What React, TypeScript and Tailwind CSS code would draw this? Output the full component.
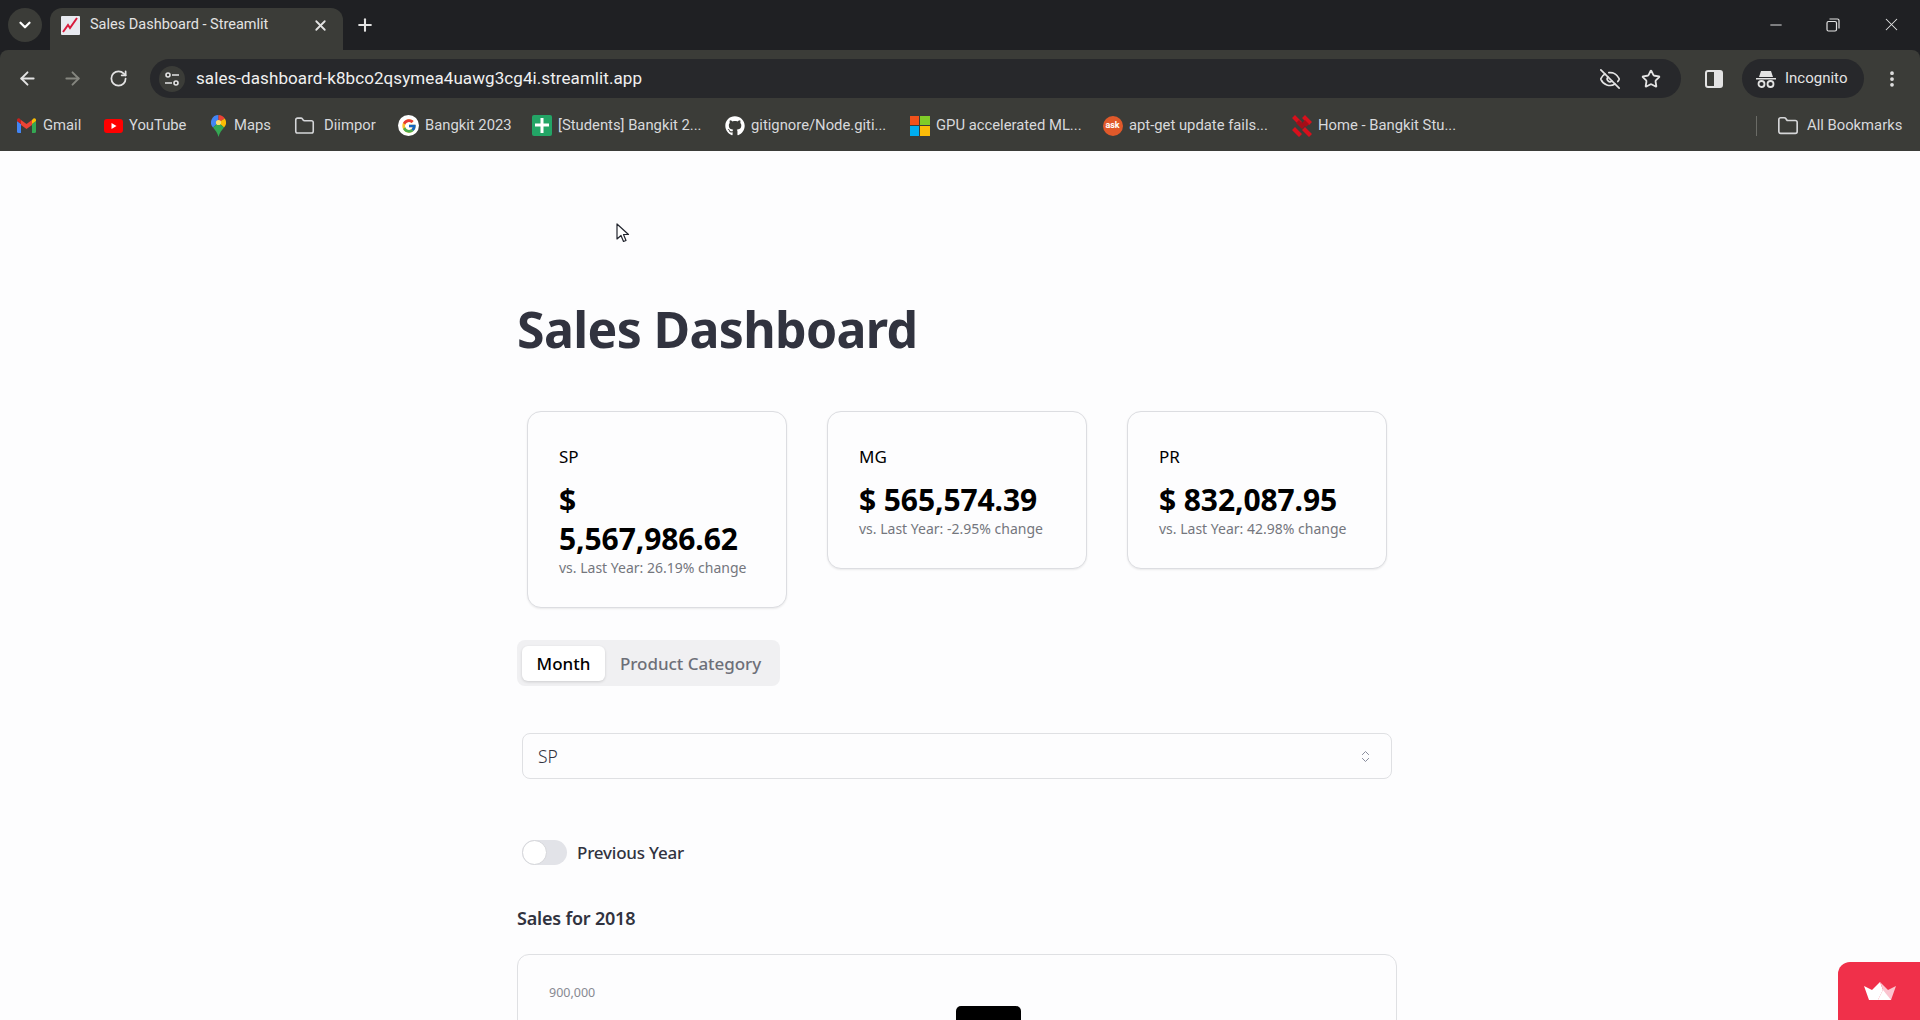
import { ArrowLeft, ArrowRight, ChevronDown, ChevronsUpDown, EllipsisVertical, EyeOff, Folder, Minus, Plus, RotateCw, Star, X } from "lucide-react";
import { FaGithub } from "react-icons/fa";
import type { ReactNode } from "react";

const GmailIcon = () => (
  <svg width="19" height="15" viewBox="0 0 19 15">
    <path d="M0 3v10.5A1.5 1.5 0 0 0 1.5 15H4V6z" fill="#4285f4" />
    <path d="M19 3v10.5a1.5 1.5 0 0 1-1.500 1.500H15V6z" fill="#34a853" />
    <path d="M4 7V2L9.500 6 15 2v5L9.500 11z" fill="#ea4335" />
    <path d="M15 2l1.500-1.500C17.500-.3 19 .4 19 2v1l-4 3z" fill="#fbbc04" />
    <path d="M4 2L2.500.5C1.500-.3 0 .4 0 2v1l4 3z" fill="#c5221f" />
  </svg>
);

const YoutubeIcon = () => (
  <svg width="19" height="14" viewBox="0 0 19 14">
    <rect width="19" height="14" rx="3" fill="#f00" />
    <path d="M7.500 4v6l5-3z" fill="#fff" />
  </svg>
);

const MapsIcon = () => (
  <svg width="15" height="22" viewBox="0 0 15 22">
    <path d="M7.500 0A7.500 7.500 0 0 0 2 12.600L7.500 7.500z" fill="#4285f4" />
    <path d="M7.500 0a7.500 7.500 0 0 1 6.300 3.500L7.500 7.500z" fill="#ea4335" />
    <path d="M13.800 3.500A7.500 7.500 0 0 1 13 12.600L7.500 7.500z" fill="#fbbc04" />
    <path d="M2 12.600L7.500 7.500 13 12.600C11 15 8.500 18 7.500 22 6.500 18 4 15 2 12.600z" fill="#34a853" />
    <circle cx="7.500" cy="7.500" r="2.600" fill="#fbdc6c" />
  </svg>
);

const GoogleIcon = () => (
  <span className="flex h-[21px] w-[21px] items-center justify-center rounded-full bg-white">
    <svg width="16" height="16" viewBox="0 0 48 48">
      <path d="M43.600 20.100H42V20H24v8h11.300C33.700 32.700 29.200 36 24 36c-6.600 0-12-5.400-12-12s5.400-12 12-12c3.100 0 5.900 1.200 8 3l5.700-5.700C34 6.100 29.300 4 24 4 13 4 4 13 4 24s9 20 20 20 20-9 20-20c0-1.300-.1-2.700-.4-3.900z" fill="#fbc02d" />
      <path d="M6.300 14.700l6.600 4.800C14.700 15.100 19 12 24 12c3.100 0 5.900 1.200 8 3l5.700-5.700C34 6.100 29.300 4 24 4 16.300 4 9.700 8.300 6.300 14.700z" fill="#e53935" />
      <path d="M24 44c5.200 0 9.900-2 13.400-5.200l-6.200-5.200C29.200 35.100 26.700 36 24 36c-5.200 0-9.600-3.300-11.300-7.900l-6.500 5C9.500 39.600 16.200 44 24 44z" fill="#4caf50" />
      <path d="M43.600 20.100H42V20H24v8h11.300c-.8 2.200-2.200 4.200-4.100 5.600l6.200 5.200C37 39.200 44 34 44 24c0-1.300-.1-2.700-.4-3.900z" fill="#1565c0" />
    </svg>
  </span>
);

const SheetIcon = () => (
  <svg width="20" height="21" viewBox="0 0 20 21">
    <rect width="20" height="21" rx="2" fill="#23a566" />
    <path d="M10 3v15M3 10h14" stroke="#fff" strokeWidth="3" />
  </svg>
);

const MicrosoftIcon = () => (
  <span className="grid h-[20px] w-[20px] grid-cols-2 gap-[1px]">
    <span className="bg-[#f1511b]" />
    <span className="bg-[#80cc28]" />
    <span className="bg-[#00adef]" />
    <span className="bg-[#fbbc09]" />
  </span>
);

const AskIcon = () => (
  <span className="flex h-[20px] w-[20px] items-center justify-center rounded-full bg-[#e0592a] text-[9px] font-bold text-white">ask</span>
);

const BangkitIcon = () => (
  <svg width="20" height="22" viewBox="0 0 20 22">
    <path d="M3 0l7 7-3 3-7-7zM13 0l7 7-3 3-7-7zM3 12l7 7-3 3-7-7zM13 12l7 7-3 3-7-7z" fill="#d8101c" />
    <path d="M7 5l6 6-3 3-6-6zM13 5l4 4-3 3-4-4z" fill="#a50d18" />
  </svg>
);

const FolderIcon = () => <Folder size={22} strokeWidth={1.8} className="text-[#d5d6d8]" />;

const bookmarks: { label: string; icon: ReactNode; width: string; gap: string }[] = [
  { label: "Gmail", icon: <GmailIcon />, width: "w-[87px]", gap: "ml-[6px]" },
  { label: "YouTube", icon: <YoutubeIcon />, width: "w-[105px]", gap: "ml-[5px]" },
  { label: "Maps", icon: <MapsIcon />, width: "w-[86px]", gap: "ml-[5px]" },
  { label: "Diimpor", icon: <FolderIcon />, width: "w-[104px]", gap: "ml-[9px]" },
  { label: "Bangkit 2023", icon: <GoogleIcon />, width: "w-[133px]", gap: "ml-[6px]" },
  { label: "[Students] Bangkit 2...", icon: <SheetIcon />, width: "w-[193px]", gap: "ml-[6px]" },
  { label: "gitignore/Node.giti...", icon: <FaGithub size={20} className="text-white" />, width: "w-[185px]", gap: "ml-[6px]" },
  { label: "GPU accelerated ML...", icon: <MicrosoftIcon />, width: "w-[193px]", gap: "ml-[6px]" },
  { label: "apt-get update fails...", icon: <AskIcon />, width: "w-[189px]", gap: "ml-[6px]" },
  { label: "Home - Bangkit Stu...", icon: <BangkitIcon />, width: "w-[190px]", gap: "ml-[6px]" },
];

const metrics = [
  { name: "SP", value: "$ 5,567,986.62", change: "vs. Last Year: 26.19% change" },
  { name: "MG", value: "$ 565,574.39", change: "vs. Last Year: -2.95% change" },
  { name: "PR", value: "$ 832,087.95", change: "vs. Last Year: 42.98% change" },
];

function BrowserChrome() {
  return (
    <div className="bg-[#1f2023] font-['Roboto',sans-serif] text-[#e3e3e3]">
      <div className="flex h-[50px] items-end pl-2">
        <div className="mb-[8px] flex h-[34px] w-[34px] items-center justify-center rounded-full bg-[#3b3c38]">
          <ChevronDown size={18} strokeWidth={3} className="text-white" />
        </div>
        <div className="ml-2 flex h-[42px] w-[293px] items-center rounded-t-[12px] bg-[#3b3c38] pb-[8px] pl-[11px]">
          <svg width="19" height="19" viewBox="0 0 19 19">
            <rect width="19" height="19" rx="1" fill="#e8eaf0" />
            <path d="M2 16l5-7 2 3 7-10" fill="none" stroke="#d81b3c" strokeWidth="2" />
          </svg>
          <span className="ml-[10px] text-[14.500px]">Sales Dashboard - Streamlit</span>
          <X size={17} strokeWidth={2.5} className="ml-auto mr-[14px]" />
        </div>
        <Plus size={20} strokeWidth={2.5} className="mb-[15px] ml-[12px]" />
        <div className="mb-[15px] ml-auto flex items-center">
          <Minus size={18} strokeWidth={1.3} />
          <svg width="14" height="14" viewBox="0 0 14 14" className="ml-[41px]" fill="none" stroke="currentColor" strokeWidth="1.200">
            <rect x="1" y="3.500" width="9.500" height="9.500" rx="1.500" />
            <path d="M3.500 1h8a1.500 1.500 0 0 1 1.500 1.500v8" />
          </svg>
          <X size={21} strokeWidth={1.2} className="ml-[41px] mr-[18px]" />
        </div>
      </div>

      <div className="flex h-[50px] items-center rounded-t-[8px] bg-[#3b3c38] pl-[17px] pt-[7px]">
        <ArrowLeft size={21} strokeWidth={2.2} />
        <ArrowRight size={21} strokeWidth={2.2} className="ml-[24px] text-[#85867f]" />
        <RotateCw size={19} strokeWidth={2.2} className="ml-[26px]" />
        <div className="ml-[22px] flex h-[39px] w-[1531px] items-center rounded-full bg-[#27282b] pl-[9px]">
          <span className="flex h-[26px] w-[26px] items-center justify-center rounded-full bg-[#3b3c38]">
            <svg width="16" height="14" viewBox="0 0 16 14" fill="none" stroke="#e3e3e3" strokeWidth="1.600">
              <circle cx="4" cy="3" r="2" />
              <path d="M8 3h7M1 11h7" />
              <circle cx="12" cy="11" r="2" />
            </svg>
          </span>
          <span className="ml-[11px] text-[17px] tracking-[0.08px] text-[#f0f0f0]">sales-dashboard-k8bco2qsymea4uawg3cg4i.streamlit.app</span>
          <EyeOff size={22} strokeWidth={1.8} className="ml-auto" />
          <Star size={20} strokeWidth={2.2} className="ml-[20px] mr-[20px]" />
        </div>
        <svg width="18" height="18" viewBox="0 0 18 18" className="ml-[24px]">
          <rect x="1" y="1" width="16" height="16" rx="2" fill="none" stroke="#e3e3e3" strokeWidth="2" />
          <rect x="9" y="1" width="8" height="16" fill="#e3e3e3" />
        </svg>
        <div className="ml-[19px] flex h-[39px] w-[122px] items-center rounded-full bg-[#27282b] pl-[14px]">
          <svg width="20" height="18" viewBox="0 0 20 18" fill="#e3e3e3">
            <path d="M5 1h10l2 6H3zM0 8h20v1.500H0z" />
            <circle cx="5.500" cy="14" r="3" fill="none" stroke="#e3e3e3" strokeWidth="1.800" />
            <circle cx="14.500" cy="14" r="3" fill="none" stroke="#e3e3e3" strokeWidth="1.800" />
          </svg>
          <span className="ml-[9px] text-[15px]">Incognito</span>
        </div>
        <EllipsisVertical size={20} strokeWidth={2.5} className="ml-[18px]" />
      </div>

      <div className="flex h-[51px] items-center bg-[#3b3c38] pl-[16px] text-[14.800px] text-[#d8d9dc]">
        {bookmarks.map((b) => (
          <div key={b.label} className={`flex items-center whitespace-nowrap ${b.width}`}>
            <span className="flex w-[21px] justify-center">{b.icon}</span>
            <span className={b.gap}>{b.label}</span>
          </div>
        ))}
        <div className="ml-[275px] h-[20px] w-px bg-[#6a6b66]" />
        <span className="ml-[20px]">
          <FolderIcon />
        </span>
        <span className="ml-[8px] whitespace-nowrap">All Bookmarks</span>
      </div>
    </div>
  );
}

function MetricCard({ name, value, change }: { name: string; value: string; change: string }) {
  return (
    <div className="w-[260px] self-start rounded-[14px] border border-[#dcdde1] bg-[#fdfdfe] pb-[30px] pl-[31px] pr-[29px] pt-[32px] shadow-[0_1px_2px_rgba(0,0,0,0.08)]">
      <div className="text-[17px] leading-[26px] text-black">{name}</div>
      <div className="mt-[10px] text-[30px] font-bold leading-[39px] tracking-[-0.1px] text-black">{value}</div>
      <div className="mt-[1px] text-[14px] leading-[18px] text-[#74767d]">{change}</div>
    </div>
  );
}

export default function App() {
  return (
    <div className="relative h-screen overflow-hidden bg-[#fdfdfe] font-['Noto_Sans',sans-serif]">
      <BrowserChrome />

      <main className="ml-[517px] w-[880px]">
        <h1 className="mt-[141px] text-[50px] font-bold leading-[74px] tracking-[-0.65px] text-[#31333f]">Sales Dashboard</h1>

        <div className="ml-[10px] mt-[45px] flex h-[199px] gap-[40px]">
          {metrics.map((m) => (
            <MetricCard key={m.name} {...m} />
          ))}
        </div>

        <div className="mt-[30px] flex h-[46px] w-[263px] items-center gap-[15px] rounded-[8px] bg-[#f0f0f2] px-[5px]">
          <div className="flex h-[35px] w-[83px] items-center justify-center rounded-[6px] bg-white pt-[1px] text-[17px] font-medium text-black shadow-[0_1px_3px_rgba(0,0,0,0.15)]">Month</div>
          <div className="whitespace-nowrap pt-[1px] text-[17px] font-medium tracking-[-0.05px] text-[#6d6f78]">Product Category</div>
        </div>

        <div className="ml-[5px] mt-[47px] flex h-[46px] w-[870px] items-center justify-between rounded-[8px] border border-[#dfe0e3] pl-[15px] pr-[18px] text-[17.500px] font-light text-[#31333f]">
          <span>SP</span>
          <ChevronsUpDown size={15} strokeWidth={1.5} className="text-[#808495]" />
        </div>

        <div className="ml-[5px] mt-[60px] flex items-center gap-[10px]">
          <div className="h-[25px] w-[45px] rounded-full bg-[#e2e3e8]">
            <div className="h-[25px] w-[25px] rounded-full border border-[#d5d6da] bg-white" />
          </div>
          <span className="pt-[1px] text-[17px] font-medium tracking-[-0.2px] text-[#31333f]">Previous Year</span>
        </div>

        <h2 className="mt-[38px] text-[18px] font-semibold leading-[28px] tracking-[-0.2px] text-[#31333f]">Sales for 2018</h2>

        <div className="relative mt-[22px] h-[400px] rounded-[12px] border border-[#dfe0e3] pl-[31px] pt-[24px]">
          <span className="text-[12.500px] leading-[18px] text-[#888a92]">900,000</span>
          <div className="absolute left-[438px] top-[51px] h-[100px] w-[65px] rounded-[5px] bg-black" />
        </div>
      </main>

      <div className="absolute bottom-0 right-0 flex h-[58px] w-[82px] items-start rounded-tl-[12px] bg-[#f0304a] pl-[26px] pt-[20px]">
        <svg width="32" height="18" viewBox="0 0 32 18">
          <path d="M0 4l8 4 8-8 3 8-5 10H5z" fill="#fff" />
          <path d="M16 0l8 8 8-4-5 14H14l5-10z" fill="#fbc4cf" />
          <path d="M14 18l5-10 8 10z" fill="#fff" />
        </svg>
      </div>

      <svg width="14" height="21" viewBox="0 0 14 21" className="absolute left-[616px] top-[223px]">
        <path d="M1 1v15l4-3.500 2.500 6 2.500-1-2.500-6h5z" fill="#fff" stroke="#22252e" strokeWidth="1.200" strokeLinejoin="round" />
      </svg>
    </div>
  );
}
